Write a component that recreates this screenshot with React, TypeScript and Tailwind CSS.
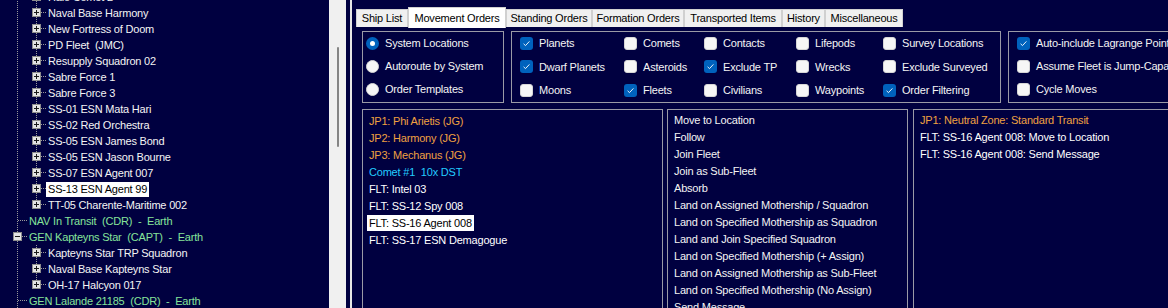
import React from "react";

type TreeRow = {
  text: string;
  kind: "child" | "group";
  box?: "plus" | "minus" | null;
  last?: boolean;
  selected?: boolean;
};

const tree: TreeRow[] = [
  { text: "Halo Comet 2", kind: "child", box: "plus" },
  { text: "Naval Base Harmony", kind: "child", box: "plus" },
  { text: "New Fortress of Doom", kind: "child", box: "plus" },
  { text: "PD Fleet  (JMC)", kind: "child", box: "plus" },
  { text: "Resupply Squadron 02", kind: "child", box: "plus" },
  { text: "Sabre Force 1", kind: "child", box: "plus" },
  { text: "Sabre Force 3", kind: "child", box: "plus" },
  { text: "SS-01 ESN Mata Hari", kind: "child", box: "plus" },
  { text: "SS-02 Red Orchestra", kind: "child", box: "plus" },
  { text: "SS-05 ESN James Bond", kind: "child", box: "plus" },
  { text: "SS-05 ESN Jason Bourne", kind: "child", box: "plus" },
  { text: "SS-07 ESN Agent 007", kind: "child", box: "plus" },
  { text: "SS-13 ESN Agent 99", kind: "child", box: "plus", selected: true },
  { text: "TT-05 Charente-Maritime 002", kind: "child", box: "plus", last: true },
  { text: "NAV In Transit  (CDR)  -  Earth", kind: "group" },
  { text: "GEN Kapteyns Star  (CAPT)  -  Earth", kind: "group", box: "minus" },
  { text: "Kapteyns Star TRP Squadron", kind: "child", box: "plus" },
  { text: "Naval Base Kapteyns Star", kind: "child", box: "plus" },
  { text: "OH-17 Halcyon 017", kind: "child", box: "plus", last: true },
  { text: "GEN Lalande 21185  (CDR)  -  Earth", kind: "group" },
];

function Expander({ x, minus }: { x: number; minus?: boolean }) {
  return (
    <g>
      <rect x={x + 0.5} y={3.5} width={8} height={8} fill="#e4e4e4" stroke="#8c8c8c" />
      <line x1={x + 2} y1={7.5} x2={x + 7} y2={7.5} stroke="#1a1a1a" />
      {!minus && <line x1={x + 4.5} y1={5} x2={x + 4.5} y2={10} stroke="#1a1a1a" />}
    </g>
  );
}

function TreeLine({ row }: { row: TreeRow }) {
  const dot = { stroke: "#9a9a9a", strokeDasharray: "1 1" };
  if (row.kind === "group") {
    return (
      <svg width={27} height={16} className="shrink-0">
        <line x1={17.5} y1={0} x2={17.5} y2={16} {...dot} />
        <line x1={18} y1={7.5} x2={27} y2={7.5} {...dot} />
        {row.box === "minus" && <Expander x={13} minus />}
      </svg>
    );
  }
  return (
    <svg width={46} height={16} className="shrink-0">
      <line x1={17.5} y1={0} x2={17.5} y2={16} {...dot} />
      <line x1={36.5} y1={0} x2={36.5} y2={row.last ? 8 : 16} {...dot} />
      <line x1={41} y1={7.5} x2={46} y2={7.5} {...dot} />
      <Expander x={32} />
    </svg>
  );
}

function Check({ on }: { on?: boolean }) {
  return on ? (
    <span className="flex h-[13px] w-[13px] shrink-0 items-center justify-center rounded-[3px] bg-[#0062bd]">
      <svg width={9} height={9} viewBox="0 0 9 9">
        <path d="M1.6 4.8 L3.5 6.6 L7.4 2.4" fill="none" stroke="#ffffff" strokeWidth={0.9} />
      </svg>
    </span>
  ) : (
    <span className="h-[13px] w-[13px] shrink-0 rounded-[3px] border border-[#d6d6d6] bg-[#f6f6f6]" />
  );
}

function CheckItem({ label, on }: { label: string; on?: boolean }) {
  return (
    <div className="flex h-[23px] items-center gap-[6px] whitespace-nowrap">
      <Check on={on} />
      <span>{label}</span>
    </div>
  );
}

function Radio({ label, on }: { label: string; on?: boolean }) {
  return (
    <div className="flex h-[23px] items-center gap-[6px] whitespace-nowrap">
      {on ? (
        <span className="flex h-[13px] w-[13px] items-center justify-center rounded-full bg-[#0062bd]">
          <span className="h-[5px] w-[5px] rounded-full bg-white" />
        </span>
      ) : (
        <span className="h-[13px] w-[13px] rounded-full border border-[#d6d6d6] bg-[#f6f6f6]" />
      )}
      <span>{label}</span>
    </div>
  );
}

const tabs = [
  { t: "Ship List", w: "w-[52px]" },
  { t: "Movement Orders", w: "w-[98px]", active: true },
  { t: "Standing Orders", w: "w-[86px]" },
  { t: "Formation Orders", w: "w-[92px]" },
  { t: "Transported Items", w: "w-[98px]" },
  { t: "History", w: "w-[43px]" },
  { t: "Miscellaneous", w: "w-[78px]" },
];

const orange = "text-[#f0a040]";

const locations: { t: string; c: string; sel?: boolean }[] = [
  { t: "JP1: Phi Arietis (JG)", c: orange },
  { t: "JP2: Harmony (JG)", c: orange },
  { t: "JP3: Mechanus (JG)", c: orange },
  { t: "Comet #1  10x DST", c: "text-[#22ccff]" },
  { t: "FLT: Intel 03", c: "text-white" },
  { t: "FLT: SS-12 Spy 008", c: "text-white" },
  { t: "FLT: SS-16 Agent 008", c: "text-white", sel: true },
  { t: "FLT: SS-17 ESN Demagogue", c: "text-white" },
];

const actions = [
  "Move to Location",
  "Follow",
  "Join Fleet",
  "Join as Sub-Fleet",
  "Absorb",
  "Land on Assigned Mothership / Squadron",
  "Land on Specified Mothership as Squadron",
  "Land and Join Specified Squadron",
  "Land on Specified Mothership (+ Assign)",
  "Land on Assigned Mothership as Sub-Fleet",
  "Land on Specified Mothership (No Assign)",
  "Send Message",
];

const orders = [
  { t: "JP1: Neutral Zone: Standard Transit", c: orange },
  { t: "FLT: SS-16 Agent 008: Move to Location", c: "text-white" },
  { t: "FLT: SS-16 Agent 008: Send Message", c: "text-white" },
];

export default function App() {
  return (
    <div className="flex h-[308px] w-[1168px] overflow-hidden bg-[#000040] font-['Liberation_Sans',Arial,sans-serif] text-[11px] tracking-[-0.2px] text-[#f4f4f4]">
      {/* fleet tree */}
      <div className="w-[329px] shrink-0 overflow-hidden">
        <div className="-mt-[11px] flex flex-col">
          {tree.map((r, i) => (
            <div key={i} className="flex h-[16px] items-center">
              <TreeLine row={r} />
              <span
                className={
                  "whitespace-pre px-[2px] leading-[15px] " +
                  (r.selected
                    ? "bg-white text-black"
                    : r.kind === "group"
                    ? "text-[#86e49a]"
                    : "text-[#f4f4f4]")
                }
              >
                {r.text}
              </span>
            </div>
          ))}
        </div>
      </div>
      <div className="w-[17px] shrink-0 bg-[#f0f0f0] pl-[8px] pt-[47px]">
        <div className="h-[100px] w-[2px] rounded-full bg-[#858585]" />
      </div>
      <div className="w-[4px] shrink-0" />
      <div className="w-[2px] shrink-0 bg-[#e6e6e6]" />

      {/* order panel */}
      <div className="flex min-w-0 flex-1 flex-col overflow-hidden pl-[4px] pt-[7px]">
        <div className="flex h-[20px] items-end text-black">
          {tabs.map((t) => (
            <div
              key={t.t}
              className={
                "flex shrink-0 items-center justify-center whitespace-nowrap border border-b-0 border-[#d0d0d0] " +
                t.w +
                (t.active ? " h-[21px] -mb-[1px] bg-white" : " h-[18px] bg-[#f0f0f0]")
              }
            >
              {t.t}
            </div>
          ))}
        </div>
        <div className="h-[1px] bg-white" />

        <div className="flex flex-1 flex-col pl-[6px] pt-[4px]">
          <div className="flex h-[72px] shrink-0 gap-[7px]">
            <div className="w-[142px] shrink-0 border border-[#9a9aa6] pl-[3px]">
              <Radio label="System Locations" on />
              <Radio label="Autoroute by System" />
              <Radio label="Order Templates" />
            </div>
            <div className="grid w-[490px] shrink-0 grid-cols-[104px_80px_92px_87px_1fr] border border-[#9a9aa6] pl-[8px]">
              <CheckItem label="Planets" on />
              <CheckItem label="Comets" />
              <CheckItem label="Contacts" />
              <CheckItem label="Lifepods" />
              <CheckItem label="Survey Locations" />
              <CheckItem label="Dwarf Planets" on />
              <CheckItem label="Asteroids" />
              <CheckItem label="Exclude TP" on />
              <CheckItem label="Wrecks" />
              <CheckItem label="Exclude Surveyed" />
              <CheckItem label="Moons" />
              <CheckItem label="Fleets" on />
              <CheckItem label="Civilians" />
              <CheckItem label="Waypoints" />
              <CheckItem label="Order Filtering" on />
            </div>
            <div className="w-[200px] shrink-0 border border-[#9a9aa6] pl-[8px]">
              <CheckItem label="Auto-include Lagrange Points" on />
              <CheckItem label="Assume Fleet is Jump-Capable" />
              <CheckItem label="Cycle Moves" />
            </div>
          </div>

          <div className="mt-[6px] flex flex-1 gap-[4px]">
            <div className="w-[301px] shrink-0 border border-b-0 border-[#9a9aa6] pl-[4px] pt-[2px]">
              {locations.map((l) => (
                <div key={l.t} className="flex h-[17px] items-center">
                  <span
                    className={
                      "whitespace-pre px-[2px] leading-[16px] " + (l.sel ? "bg-white text-black" : l.c)
                    }
                  >
                    {l.t}
                  </span>
                </div>
              ))}
            </div>
            <div className="w-[241px] shrink-0 border border-b-0 border-[#9a9aa6] pl-[4px] pt-[2px]">
              {actions.map((a) => (
                <div key={a} className="flex h-[17px] items-center whitespace-nowrap px-[2px]">
                  {a}
                </div>
              ))}
            </div>
            <div className="ml-[1px] w-[300px] shrink-0 border border-b-0 border-[#9a9aa6] pl-[4px] pt-[2px]">
              {orders.map((o) => (
                <div key={o.t} className={"flex h-[17px] items-center whitespace-nowrap px-[2px] " + o.c}>
                  {o.t}
                </div>
              ))}
            </div>
          </div>
        </div>
      </div>
    </div>
  );
}
